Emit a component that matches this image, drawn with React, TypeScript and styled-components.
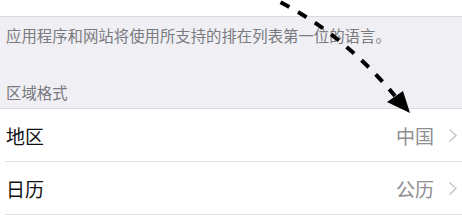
import React from "react";
import styled, { createGlobalStyle } from "styled-components";

const GlobalStyle = createGlobalStyle`
  html, body {
    margin: 0;
    padding: 0;
    background: #ffffff;
    overflow: hidden;
  }
  body {
    font-family: "Noto Sans CJK SC", "Noto Sans", sans-serif;
  }
`;

interface RowItem {
  id: string;
  label: string;
  value: string;
}

const rows: RowItem[] = [
  { id: "region", label: "地区", value: "中国" },
  { id: "calendar", label: "日历", value: "公历" },
];

const App = () => {
  return (
    <Page>
      <GlobalStyle />
      <TopCell>
        <LinkText>编辑语言顺序</LinkText>
      </TopCell>

      <GroupGap>
        <FooterNote>应用程序和网站将使用所支持的排在列表第一位的语言。</FooterNote>
        <SectionHeader>区域格式</SectionHeader>
      </GroupGap>

      <List>
        {rows.map((row) => (
          <Row key={row.id}>
            <Label>{row.label}</Label>
            <Value>{row.value}</Value>
            <Chevron viewBox="0 0 10 15" width={10} height={15}>
              <path
                d="M1.5 1.5 L8 7.5 L1.5 13.5"
                fill="none"
                stroke="#c7c7cc"
                strokeWidth={1.5}
              />
            </Chevron>
          </Row>
        ))}
      </List>

      {/* the dashed annotation arrow drawn over the page */}
      <ArrowLayer viewBox="0 0 462 221" width={462} height={221}>
        <path
          d="M268 -4 Q340 30 395 96"
          fill="none"
          stroke="#000"
          strokeWidth={4}
          strokeDasharray="10 10"
          strokeDashoffset={6}
        />
        <polygon points="403,91 387,102 410,113" fill="#000" />
      </ArrowLayer>
    </Page>
  );
};

export default App;

const Page = styled.div`
  position: relative;
  width: 462px;
  height: 221px;
  overflow: hidden;
  background: #ffffff;
`;

const TopCell = styled.div`
  height: 16px;
  overflow: hidden;
  background: #ffffff;
  border-bottom: 1px solid #d9d9de;
  padding-left: 10px;
`;

const LinkText = styled.div`
  margin-top: -21px;
  font-size: 19px;
  line-height: 20px;
  color: #8fb8f8;
`;

const GroupGap = styled.div`
  background: #efeff4;
  display: flex;
  flex-direction: column;
  gap: 37px;
  padding: 8px 6px 6px;
  border-bottom: 1px solid #d9d9de;
`;

const FooterNote = styled.div`
  font-size: 15.4px;
  line-height: 20px;
  color: #7a7a7f;
  white-space: nowrap;
`;

const SectionHeader = styled.div`
  font-size: 15.4px;
  line-height: 20px;
  color: #7a7a7f;
`;

const List = styled.div`
  display: flex;
  flex-direction: column;
  padding-left: 5px;
`;

const Row = styled.div`
  display: flex;
  align-items: center;
  height: 52px;
  padding-right: 4px;
  border-bottom: 1px solid #e2e2e6;
`;

const Label = styled.div`
  flex: 1;
  padding-left: 1px;
  font-size: 19px;
  color: #111111;
`;

const Value = styled.div`
  font-size: 19px;
  color: #8e8e93;
  margin-right: 14px;
`;

const Chevron = styled.svg`
  display: block;
`;

const ArrowLayer = styled.svg`
  position: absolute;
  left: 0;
  top: 0;
  pointer-events: none;
`;
